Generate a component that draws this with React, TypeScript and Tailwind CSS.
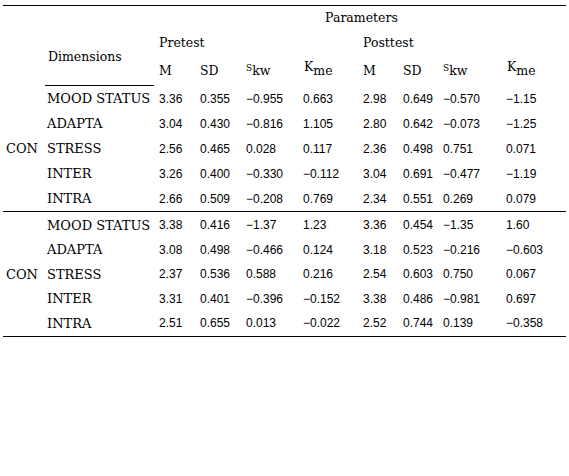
const cols = "grid grid-cols-[42px_112px_41px_44px_59px_60px_40px_40px_63px_62px]";

type Row = { dim: string; vals: string[] };

const groups: Row[][] = [
  [
    { dim: "MOOD STATUS", vals: ["3.36", "0.355", "−0.955", "0.663", "2.98", "0.649", "−0.570", "−1.15"] },
    { dim: "ADAPTA", vals: ["3.04", "0.430", "−0.816", "1.105", "2.80", "0.642", "−0.073", "−1.25"] },
    { dim: "STRESS", vals: ["2.56", "0.465", "0.028", "0.117", "2.36", "0.498", "0.751", "0.071"] },
    { dim: "INTER", vals: ["3.26", "0.400", "−0.330", "−0.112", "3.04", "0.691", "−0.477", "−1.19"] },
    { dim: "INTRA", vals: ["2.66", "0.509", "−0.208", "0.769", "2.34", "0.551", "0.269", "0.079"] },
  ],
  [
    { dim: "MOOD STATUS", vals: ["3.38", "0.416", "−1.37", "1.23", "3.36", "0.454", "−1.35", "1.60"] },
    { dim: "ADAPTA", vals: ["3.08", "0.498", "−0.466", "0.124", "3.18", "0.523", "−0.216", "−0.603"] },
    { dim: "STRESS", vals: ["2.37", "0.536", "0.588", "0.216", "2.54", "0.603", "0.750", "0.067"] },
    { dim: "INTER", vals: ["3.31", "0.401", "−0.396", "−0.152", "3.38", "0.486", "−0.981", "0.697"] },
    { dim: "INTRA", vals: ["2.51", "0.655", "0.013", "−0.022", "2.52", "0.744", "0.139", "−0.358"] },
  ],
];

// left padding per value column, so text starts where the reference has it
const valPad = ["pl-[2px]", "pl-[2px]", "pl-[4px]", "pl-[2px]", "pl-[2px]", "pl-[2px]", "pl-[2px]", "pl-[2px]"];

const serif = "font-['DejaVu_Serif',serif] text-[12.5px]";
const label = "font-['DejaVu_Serif',serif] text-[13px]";
const nums = "font-['Liberation_Sans',sans-serif] text-[12px]";

const Skw = () => (
  <span className="inline-flex items-end">
    <span className="relative -top-[5px] text-[9px]">S</span>
    <span>kw</span>
  </span>
);

const Kme = () => (
  <span className="inline-flex items-end">
    <span className="relative -top-[4px]">K</span>
    <span>me</span>
  </span>
);

const Group = ({ rows, rowH, className }: { rows: Row[]; rowH: string; className: string }) => (
  <div className={`border-b border-black ${className}`}>
    {rows.map((row, i) => (
      <div key={row.dim} className={`${cols} ${rowH} items-center`}>
        <div className={`${label} pl-[3px]`}>{i === 2 ? "CON" : ""}</div>
        <div className={`${label} pl-[2px] whitespace-nowrap`}>{row.dim}</div>
        {row.vals.map((v, j) => (
          <div key={j} className={`${nums} ${valPad[j]} whitespace-nowrap`}>
            {v}
          </div>
        ))}
      </div>
    ))}
  </div>
);

export default function App() {
  return (
    <div className="w-[569px] h-[476px] bg-white text-black">
      <div className="ml-[3px] mt-[5px] w-[563px] border-t border-black">
        <div className={`${cols} grid-rows-[24px_26px_30px] ${serif}`}>
          <div className="col-start-3 col-span-8 row-start-1 flex items-center justify-center">Parameters</div>
          <div className="col-start-2 row-start-2 row-span-2 flex items-center">
            <div className="w-[109px] h-full flex items-center border-b border-black pl-[3px]">Dimensions</div>
          </div>
          <div className="col-start-3 col-span-4 row-start-2 flex items-center pl-[2px]">Pretest</div>
          <div className="col-start-7 col-span-4 row-start-2 flex items-center pl-[2px]">Posttest</div>
          <div className="col-start-3 row-start-3 flex items-center pl-[2px]">M</div>
          <div className="col-start-4 row-start-3 flex items-center pl-[2px]">SD</div>
          <div className="col-start-5 row-start-3 flex items-center pl-[4px]"><Skw /></div>
          <div className="col-start-6 row-start-3 flex items-center pl-[3px]"><Kme /></div>
          <div className="col-start-7 row-start-3 flex items-center pl-[2px]">M</div>
          <div className="col-start-8 row-start-3 flex items-center pl-[2px]">SD</div>
          <div className="col-start-9 row-start-3 flex items-center pl-[2px]"><Skw /></div>
          <div className="col-start-10 row-start-3 flex items-center pl-[3px]"><Kme /></div>
        </div>
        <Group rows={groups[0]} rowH="h-[25px]" className="" />
        <Group rows={groups[1]} rowH="h-[24.5px]" className="pt-[1px]" />
      </div>
    </div>
  );
}
